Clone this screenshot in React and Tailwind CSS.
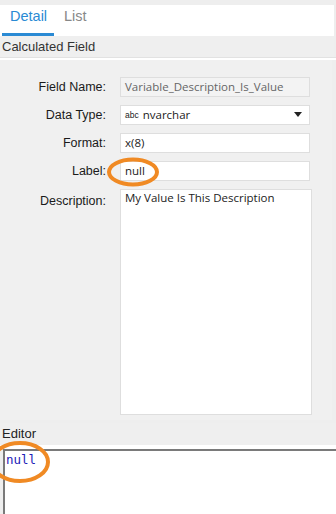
import React from 'react';

const labelCls = "w-[108px] shrink-0 text-right pr-[2px] text-[12.5px] text-[#1a1a1a]";
const boxCls = "w-[190px] h-[20px] border border-[#dedede] flex items-center px-[4px] text-[11.5px] text-[#222]";

const Row = ({ label, children, className = "" }) => (
  <div className={"flex items-center gap-[12px] " + className}>
    <div className={labelCls}>{label}</div>
    {children}
  </div>
);

export default function App() {
  return (
    <div className="w-[336px] h-[514px] bg-[#eeeeee] overflow-hidden relative" style={{ fontFamily: '"Liberation Sans", Arial, sans-serif' }}>
      <div className="h-[5px]" />
      {/* tabs */}
      <div className="h-[31px] bg-white flex items-end pl-[2px] mr-[2px]">
        <div className="w-[52px] h-full flex flex-col justify-end">
          <div className="text-[14.5px] text-[#2a8ad4] pl-[8px] pb-[5px]">Detail</div>
          <div className="h-[3px] bg-[#2a8ad4]" />
        </div>
        <div className="text-[14.5px] text-[#888] pl-[10px] pb-[8px]">List</div>
      </div>
      <div className="h-[21px] bg-[#efefef] text-[13px] text-[#333] pl-[2px] flex items-center mr-[2px]">Calculated Field</div>
      <div className="h-[1px] bg-[#e2e2e2]" />
      <div className="h-[2px] bg-white" />

      {/* detail panel */}
      <div className="h-[360px] bg-[#f0f0f0] mr-[4px] pt-[17px] flex flex-col gap-[8px]">
        <Row label="Field Name:">
          <div className={boxCls + " bg-[#f3f3f3] text-[#666]"} style={{ fontFamily: '"Open Sans", sans-serif' }}>Variable_Description_Is_Value</div>
        </Row>
        <Row label="Data Type:">
          <div className={boxCls + " bg-white justify-between"} style={{ fontFamily: '"Open Sans", sans-serif' }}>
            <span className="flex items-center gap-[4px]"><span className="text-[8.5px]" style={{ fontFamily: '"Liberation Sans", sans-serif' }}>abc</span><span>nvarchar</span></span>
            <svg width="9" height="6" viewBox="0 0 9 6" className="mr-[2px]"><path d="M0 0 H8 L4 5 Z" fill="#222" /></svg>
          </div>
        </Row>
        <Row label="Format:">
          <div className={boxCls + " bg-white"} style={{ fontFamily: '"Open Sans", sans-serif' }}>x(8)</div>
        </Row>
        <Row label="Label:">
          <div className={boxCls + " bg-white"} style={{ fontFamily: '"Open Sans", sans-serif' }}>null</div>
        </Row>
        <div className="flex items-start gap-[12px]">
          <div className={labelCls + " pt-[3px]"}>Description:</div>
          <div className="w-[192px] h-[226px] bg-white border border-[#dedede] px-[4px] text-[11.5px] leading-[16px] text-[#222]" style={{ fontFamily: '"Open Sans", sans-serif' }}>My Value Is This Description</div>
        </div>
      </div>

      <div className="h-[3px]" />
      {/* editor */}
      <div className="h-[22px] bg-[#efefef] text-[13px] text-[#222] pl-[2px] flex items-center">Editor</div>
      <div className="h-[4px] bg-white" />
      <div className="h-[70px] bg-white border-t-2 border-l-2 border-[#7a7a7a] ml-[3px] pl-[1px]">
        <div className="text-[12.5px] text-[#1c1cb8]" style={{ fontFamily: '"DejaVu Sans Mono", monospace' }}>null</div>
      </div>

      {/* annotations */}
      <svg className="absolute left-0 top-0 pointer-events-none" width="336" height="514">
        <ellipse cx="133" cy="172" rx="24" ry="12.5" fill="none" stroke="#f08a24" strokeWidth="4" />
        <ellipse cx="20" cy="462" rx="28" ry="19" fill="none" stroke="#f08a24" strokeWidth="4" />
      </svg>
    </div>
  );
}
